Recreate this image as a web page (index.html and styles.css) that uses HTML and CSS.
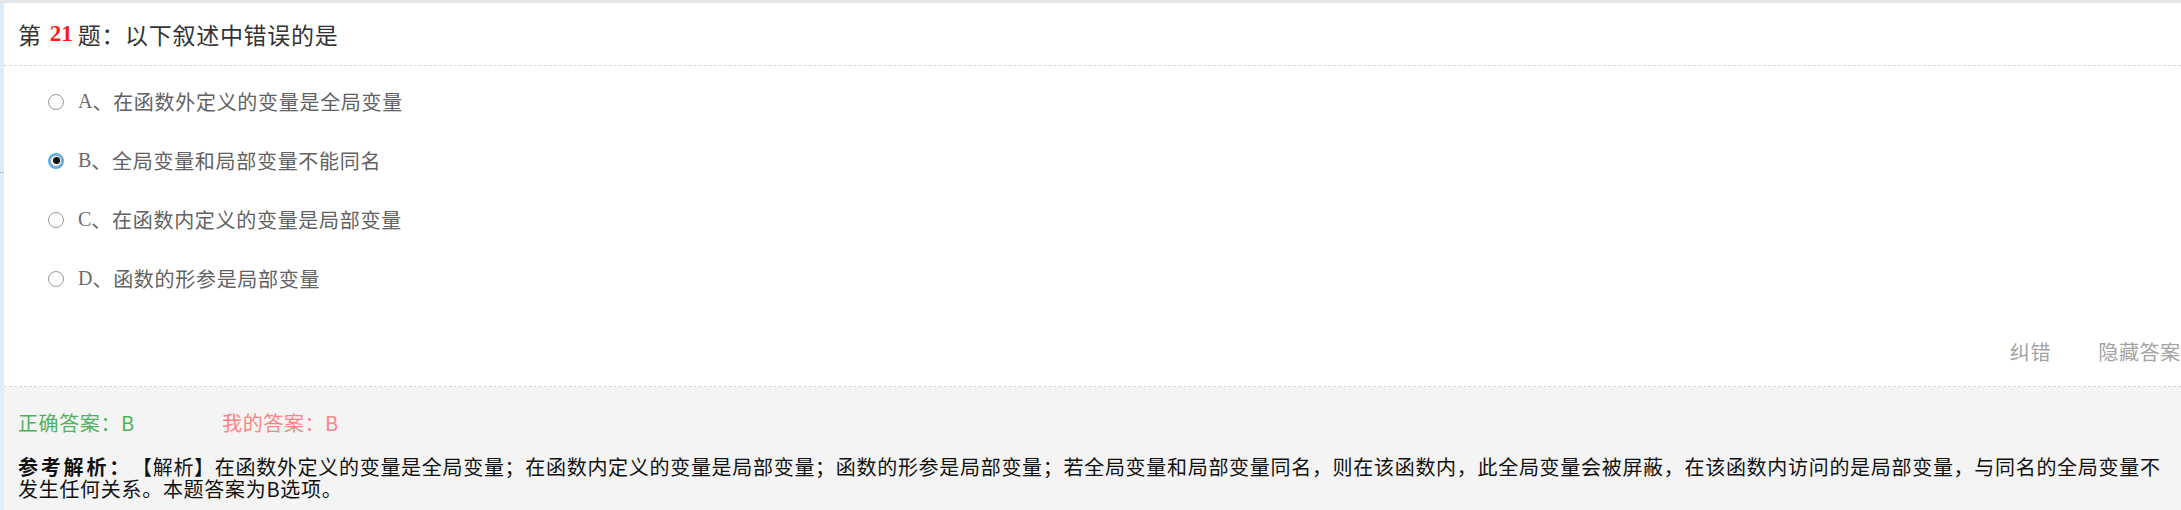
FILE: index.html
```html
<!DOCTYPE html>
<html>

<head>
	<link rel="stylesheet" href="styles.css">
</head>

<body>
	<div class="page">
		<div class="side">
			<div class="side-mark"></div>
		</div>
		<div class="main">
			<div class="q-title">
				<span>第</span><span class="q-num">21</span><span>题：以下叙述中错误的是</span>
			</div>

			<div class="options">
				<div class="option">
					<span class="radio"></span>
					<span class="opt-key">A</span><span>、在函数外定义的变量是全局变量</span>
				</div>
				<div class="option">
					<span class="radio checked"></span>
					<span class="opt-key">B</span><span>、全局变量和局部变量不能同名</span>
				</div>
				<div class="option">
					<span class="radio"></span>
					<span class="opt-key">C</span><span>、在函数内定义的变量是局部变量</span>
				</div>
				<div class="option">
					<span class="radio"></span>
					<span class="opt-key">D</span><span>、函数的形参是局部变量</span>
				</div>
			</div>

			<div class="tools">
				<span class="tool">纠错</span>
				<span class="tool">隐藏答案</span>
			</div>

			<div class="answer">
				<div class="answer-row">
					<span class="right-answer">正确答案：B</span>
					<span class="my-answer">我的答案：B</span>
				</div>
				<div class="analysis">
					<strong>参考解析：</strong>【解析】在函数外定义的变量是全局变量；在函数内定义的变量是局部变量；函数的形参是局部变量；若全局变量和局部变量同名，则在该函数内，此全局变量会被屏蔽，在该函数内访问的是局部变量，与同名的全局变量不发生任何关系。本题答案为B选项。
				</div>
			</div>
		</div>
	</div>
</body>

</html>
```

FILE: styles.css
```css
body {
	margin: 0;
	font-family: "Noto Sans CJK SC", "Noto Sans", sans-serif;
	background-color: #ffffff;
}

.page {
	display: flex;
	height: 507px;
	border-top: 3px solid #e5e5e5;
	overflow: hidden;
}

.side {
	width: 4px;
	flex-shrink: 0;
	background-color: #dcedfc;
}

.side-mark {
	margin-top: 169px;
	height: 1px;
	background-color: #b9c2ca;
}

.main {
	flex: 1;
	display: flex;
	flex-direction: column;
	min-width: 0;
}

.q-title {
	height: 62px;
	display: flex;
	align-items: center;
	padding-left: 14px;
	font-size: 23px;
	letter-spacing: 0.7px;
	color: #333;
	border-bottom: 1px dashed #d8d8d8;
}

.q-num {
	font-family: "Liberation Serif", serif;
	font-weight: bold;
	color: #ff1a1a;
	letter-spacing: 0;
	margin: 0 5px 0 8px;
}

.options {
	padding: 6px 0 0 44px;
}

.option {
	height: 59px;
	display: flex;
	align-items: center;
	font-size: 20px;
	letter-spacing: 0.7px;
	color: #626262;
}

.radio {
	width: 14px;
	height: 14px;
	border: 1px solid #9a9a9a;
	border-radius: 50%;
	background-color: #fdfdfd;
	margin-right: 14px;
	display: flex;
	align-items: center;
	justify-content: center;
}

.radio.checked {
	width: 12px;
	height: 12px;
	border: 2px solid #59abe3;
	box-shadow: inset 0 0 0 1px #8fa3b3;
}

.radio.checked::after {
	content: "";
	width: 7px;
	height: 7px;
	border-radius: 50%;
	background-color: #111;
}

.opt-key {
	font-family: "Liberation Serif", serif;
	letter-spacing: 0;
	color: #6b6b6b;
}

.tools {
	display: flex;
	justify-content: flex-end;
	padding: 32px 0 22px;
	line-height: 24px;
	font-size: 20px;
	letter-spacing: 0.7px;
	color: #a3a3a3;
	border-bottom: 1px dashed #d8d8d8;
}

.tool {
	margin-left: 47px;
}

.answer {
	flex: 1;
	background-color: #f4f4f4;
	padding: 24px 10px 0 14px;
}

.answer-row {
	line-height: 24px;
	font-size: 20px;
	letter-spacing: 0.6px;
}

.right-answer {
	display: inline-block;
	width: 199px;
	color: #4fb35a;
}

.my-answer {
	color: #ff8585;
}

.analysis {
	margin-top: 21px;
	line-height: 22px;
	font-size: 20px;
	letter-spacing: 0.7px;
	color: #111;
}

.analysis strong {
	display: inline-block;
	height: 22px;
	letter-spacing: 2.8px;
}
```
